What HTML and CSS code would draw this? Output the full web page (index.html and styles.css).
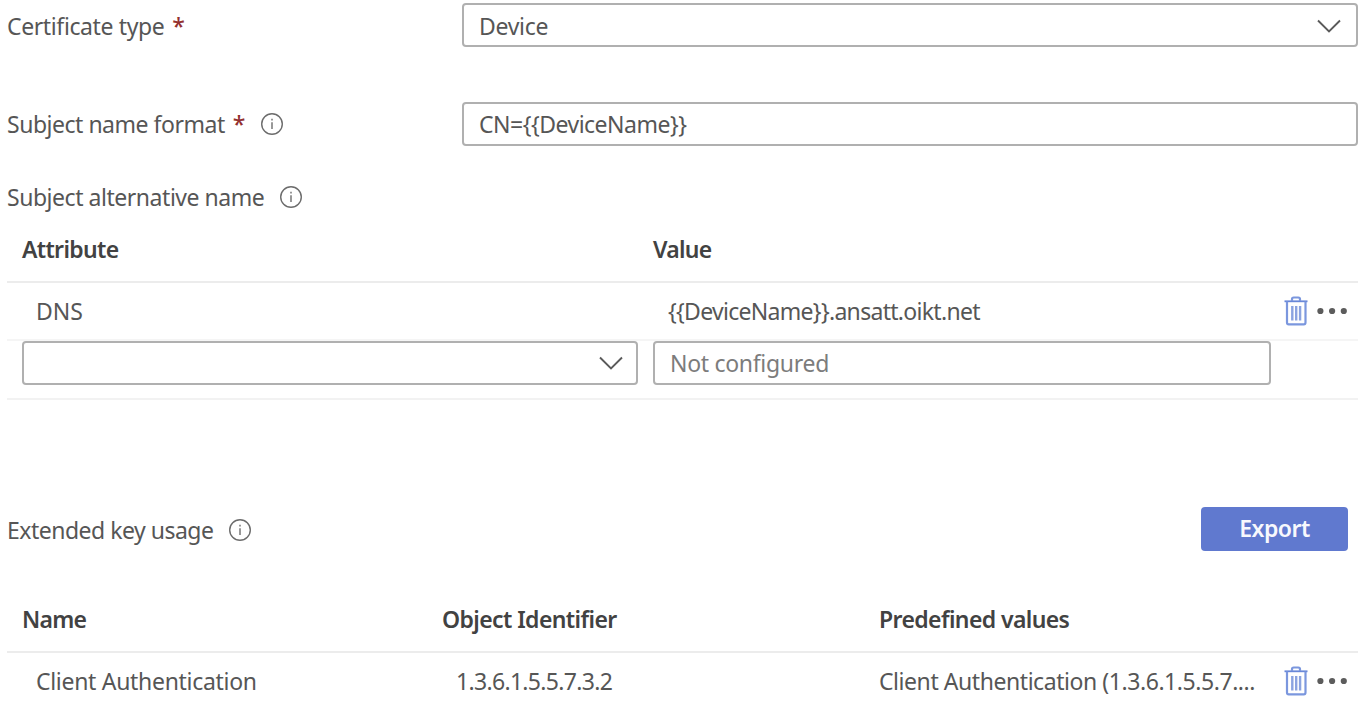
FILE: index.html
```
<!DOCTYPE html>
<html lang="en">
<head>
<meta charset="utf-8">
<title>Certificate profile</title>
<link rel="stylesheet" href="styles.css">
</head>
<body>
<svg class="sprite" aria-hidden="true">
  <symbol id="info" viewBox="0 0 24 24"><circle cx="12" cy="12" r="10.3" fill="none" stroke="#6c6c6c" stroke-width="1.4"/><path d="M12 10.2V17M12 6.8V8.5" stroke="#777" stroke-width="1.5"/></symbol>
  <symbol id="chevron" viewBox="0 0 26 16"><path d="M2 2.5 13 13.5 24 2.5" fill="none" stroke="#5a5a5a" stroke-width="1.9"/></symbol>
  <symbol id="trash" viewBox="0 0 24 30"><path d="M.5 5.3H23.5" stroke="#6887d8" stroke-width="1.8" fill="none"/><path d="M8 5V3.2Q8 1.5 9.7 1.5H14.3Q16 1.5 16 3.2V5M3 5.5V26.5Q3 28.3 4.7 28.3H19.8Q21.5 28.3 21.5 26.5V5.5" stroke="#7b97de" stroke-width="2.2" fill="none"/><path d="M8.3 10V24.5M12.2 10V24.5M16.1 10V24.5" stroke="#8ba3e0" stroke-width="2.4"/></symbol>
  <symbol id="more" viewBox="0 0 32 8"><g fill="#5c5c5c"><circle cx="4.4" cy="4" r="3.1"/><circle cx="16.1" cy="4" r="3.1"/><circle cx="27.8" cy="4" r="3.1"/></g></symbol>
</svg>
<main class="form">
  <div class="field">
    <label class="label label-cert"><span class="t-cert">Certificate type</span><span class="required">*</span></label>
    <div class="control control-device"><span class="t-device">Device</span><svg class="chevron"><use href="#chevron"/></svg></div>
  </div>
  <div class="field field-subject">
    <label class="label"><span class="t-subject">Subject name format</span><span class="required">*</span><svg class="info"><use href="#info"/></svg></label>
    <div class="control"><span class="t-cn">CN={{DeviceName}}</span></div>
  </div>
  <div class="label label-san"><span class="t-san">Subject alternative name</span><svg class="info"><use href="#info"/></svg></div>
  <section class="san">
    <div class="row head"><span class="t-attr">Attribute</span><span class="t-value">Value</span></div>
    <div class="row data"><span class="cell t-dns">DNS</span><span class="cell t-host">{{DeviceName}}.ansatt.oikt.net</span><span class="actions"><svg class="trash"><use href="#trash"/></svg><svg class="more"><use href="#more"/></svg></span></div>
    <div class="row entry"><div class="control select"><svg class="chevron"><use href="#chevron"/></svg></div><div class="control placeholder"><span class="t-not">Not configured</span></div></div>
  </section>
  <div class="usage-bar">
    <div class="label label-ext"><span class="t-ext">Extended key usage</span><svg class="info"><use href="#info"/></svg></div>
    <button class="export"><span class="t-export">Export</span></button>
  </div>
  <section class="usage">
    <div class="row head"><span class="t-name">Name</span><span class="t-oid">Object Identifier</span><span class="t-pre">Predefined values</span></div>
    <div class="row data"><span class="cell t-client">Client Authentication</span><span class="cell t-num">1.3.6.1.5.5.7.3.2</span><span class="t-long">Client Authentication (1.3.6.1.5.5.7....</span><span class="actions"><svg class="trash"><use href="#trash"/></svg><svg class="more"><use href="#more"/></svg></span></div>
  </section>
</main>
</body>
</html>
```
FILE: styles.css
```
* { box-sizing: border-box; }
body { margin: 0; background: #fff; color: #565656; font: 23px/30px "Noto Sans", "Open Sans", sans-serif; overflow: hidden; }
.sprite { display: none; }
.form { height: 704px; padding: 3px 11px 0 7px; overflow: hidden; white-space: nowrap; }
.field { display: grid; grid-template-columns: 455px 896px; height: 44px; align-items: center; }
.field-subject { margin-top: 55px; }
.label { display: flex; align-items: center; height: 30px; }
.label-cert { padding-top: 2px; }
.label-ext { padding-top: 1px; }
.required { color: #93302f; margin-left: 8px; font-weight: 500; }
.info { width: 24px; height: 24px; margin-left: 15px; }
.control { display: flex; align-items: center; height: 44px; border: 2px solid #b0b0b0; border-radius: 4px; padding: 0 15px; background: #fff; }
.control-device { padding: 1px 14px 0 15px; }
.chevron { width: 26px; height: 16px; margin-left: auto; }
.label-san { margin-top: 36px; }
.san { margin-top: 5px; }
.row { display: grid; align-items: center; }
.san .row { grid-template-columns: 631px 618px 1fr; padding-left: 15px; }
.head { height: 66px; border-bottom: 2px solid #ececec; color: #424242; font-weight: 600; }
.data { height: 58px; border-bottom: 2px solid #f5f5f5; }
.cell { padding-left: 14px; }
.actions { display: flex; align-items: center; padding-left: 13px; gap: 8px; }
.trash { width: 24px; height: 30px; }
.more { width: 32px; height: 8px; }
.entry { height: 59px; border-bottom: 2px solid #f2f2f2; align-items: start; }
.select { width: 616px; padding-right: 12px; }
.placeholder { color: #7c7c7c; }
.usage-bar { display: flex; align-items: center; justify-content: space-between; height: 44px; margin-top: 107px; padding-right: 10px; }
.export { width: 147px; height: 44px; border: 0; border-radius: 4px; background: #6079cf; color: #f7f8fd; font: inherit; font-weight: 600; padding: 0 0 2px; }
.usage { margin-top: 35px; }
.usage .head { height: 67px; }
.usage .row { grid-template-columns: 420px 437px 392px 1fr; padding-left: 15px; }

/* Per-string tracking */
.t-cert { letter-spacing: -.38px; }
.t-device { letter-spacing: -.3px; }
.t-subject { letter-spacing: -.48px; }
.t-cn { letter-spacing: -.5px; }
.t-san { letter-spacing: -.46px; }
.t-attr { letter-spacing: -.67px; }
.t-value { letter-spacing: -.75px; }
.cell.t-host { letter-spacing: -.7px; padding-left: 15px; }
.t-not { letter-spacing: -.3px; }
.t-ext { letter-spacing: -.5px; }
.t-export { letter-spacing: -.5px; }
.t-name { letter-spacing: -.75px; }
.t-oid { letter-spacing: -.59px; }
.t-pre { letter-spacing: -.6px; }
.t-client { letter-spacing: -.3px; }
.t-num { letter-spacing: -.68px; }
.t-long { letter-spacing: -.44px; }
```
